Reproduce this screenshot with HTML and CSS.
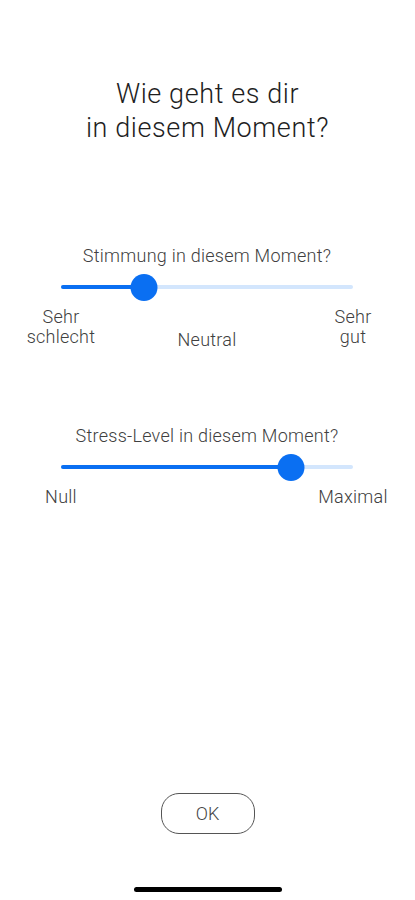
FILE: index.html
```html
<!DOCTYPE html>
<html lang="de">
<head>
<meta charset="utf-8">
<title>Wie geht es dir</title>
<link rel="stylesheet" href="styles.css">
</head>
<body>
<main class="screen">
  <h1 class="title">Wie geht es dir<br>in diesem Moment?</h1>

  <section class="question q-mood">
    <p class="q-label">Stimmung in diesem Moment?</p>
    <div class="slider">
      <div class="track">
        <div class="fill" style="width: 28.4%"></div>
      </div>
      <div class="thumb" style="left: 28.4%"></div>
    </div>
    <div class="scale">
      <span class="end end-left">Sehr<br>schlecht</span>
      <span class="mid">Neutral</span>
      <span class="end end-right">Sehr<br>gut</span>
    </div>
  </section>

  <section class="question q-stress">
    <p class="q-label">Stress-Level in diesem Moment?</p>
    <div class="slider">
      <div class="track">
        <div class="fill" style="width: 78.8%"></div>
      </div>
      <div class="thumb" style="left: 78.8%"></div>
    </div>
    <div class="scale">
      <span class="end end-left">Null</span>
      <span class="end end-right">Maximal</span>
    </div>
  </section>

  <div class="spacer"></div>

  <button class="ok" type="button">OK</button>
  <div class="home-indicator"></div>
</main>
</body>
</html>
```

FILE: styles.css
```css
* { box-sizing: border-box; }

html, body {
  margin: 0;
  padding: 0;
  background: #ffffff;
}

body {
  font-family: Roboto, "Liberation Sans", sans-serif;
  color: #222222;
}

.screen {
  width: 415px;
  height: 900px;
  display: flex;
  flex-direction: column;
  align-items: stretch;
  padding-top: 77px;
}

.title {
  margin: 0;
  font-size: 27px;
  line-height: 34px;
  font-weight: 300;
  letter-spacing: 0.6px;
  text-align: center;
  color: #1e1e1e;
}

.question {
  display: flex;
  flex-direction: column;
  margin: 0 62px 0 61px;
}

.q-mood { margin-top: 101px; }
.q-stress { margin-top: 79px; }

.q-label {
  margin: 0;
  font-size: 18px;
  line-height: 20px;
  font-weight: 300;
  letter-spacing: 0.25px;
  color: #404040;
  text-align: center;
  white-space: nowrap;
}

.slider {
  position: relative;
  height: 28px;
  margin-top: 7px;
  display: flex;
  align-items: center;
}

.track {
  width: 100%;
  height: 4px;
  border-radius: 2px;
  background: #d3e6fd;
  display: flex;
}

.fill {
  height: 100%;
  border-radius: 2px;
  background: #0a6ff2;
}

.thumb {
  position: absolute;
  top: 1px;
  width: 27px;
  height: 27px;
  border-radius: 50%;
  background: #0a6ff2;
  transform: translateX(-50%);
}

.scale {
  margin-top: 6px;
  display: flex;
  justify-content: space-between;
  align-items: flex-end;
  font-size: 18px;
  line-height: 20px;
  font-weight: 300;
  letter-spacing: 0.25px;
  color: #404040;
  text-align: center;
}

.end {
  width: 96px;
  flex: none;
}

.end-left { margin-left: -48px; }
.end-right { margin-right: -48px; }

.mid {
  margin-bottom: -3px;
}

.spacer { flex: 1; }

.ok {
  align-self: center;
  width: 94px;
  height: 41px;
  border: 1px solid #555555;
  border-radius: 18px;
  background: #ffffff;
  font-family: Roboto, "Liberation Sans", sans-serif;
  font-size: 18px;
  font-weight: 300;
  color: #444444;
  padding: 0;
}

.home-indicator {
  align-self: center;
  width: 148px;
  height: 5px;
  border-radius: 3px;
  background: #000000;
  margin-top: 53px;
  margin-bottom: 8px;
}
```
